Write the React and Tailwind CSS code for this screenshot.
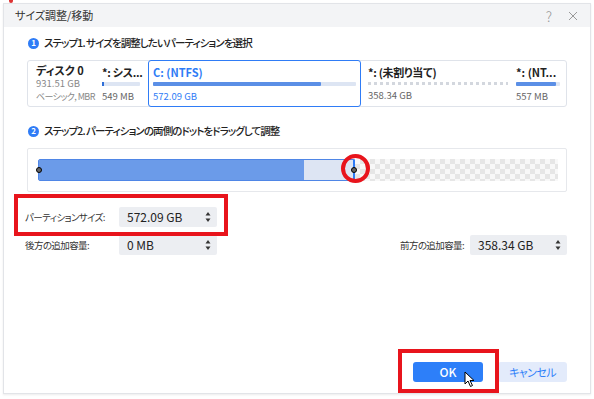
import React from "react";

const jp = { fontFamily: '"Noto Sans CJK JP", "Noto Sans", sans-serif' };

const StepBadge = ({ n }) => (
  <span className="flex h-[11px] w-[11px] items-center justify-center rounded-full bg-[#2f7cf6] text-[8px] font-bold leading-none text-white">
    {n}
  </span>
);

const Spinner = () => (
  <svg width="6" height="12" viewBox="0 0 6 12" className="shrink-0">
    <path d="M3 1 L5.5 4.5 H0.5 Z" fill="#333" />
    <path d="M3 11 L5.5 7.5 H0.5 Z" fill="#333" />
  </svg>
);

const NumberField = ({ value, width = "w-[98px]" }) => (
  <div className={`flex h-[20px] ${width} shrink-0 items-center justify-between rounded-[2px] bg-[#eceef2] pl-[8px] pr-[6px] text-[12px] tracking-normal text-[#222]`}>
    <span>{value}</span>
    <Spinner />
  </div>
);

const Bar = ({ fill }) => (
  <div className="h-[4px] w-full rounded-[1px] bg-[#dde5f3]">
    <div className="h-full rounded-[1px] bg-[#5b8fe6]" style={{ width: fill }} />
  </div>
);

export default function App() {
  return (
    <div
      className="relative h-[399px] w-[594px] overflow-hidden whitespace-nowrap bg-white [font-feature-settings:'palt']"
      style={jp}
    >
      <div className="absolute left-[9px] top-0 h-[3px] w-[4px] rounded-b-sm bg-[#d33]" />

      {/* dialog */}
      <div className="ml-[3px] mt-[3px] flex h-[391px] w-[588px] flex-col border border-[#e2e4e8] bg-white shadow-[0_1px_2px_rgba(0,0,0,0.08)]">
        {/* title bar */}
        <div className="flex h-[23px] items-center justify-between bg-[#f3f4f6] pl-[11px] pr-[12px]">
          <span className="text-[11px] text-[#333]">サイズ調整/移動</span>
          <div className="flex items-center gap-[16px] text-[#999]">
            <span className="text-[14px] font-light leading-none">?</span>
            <svg width="10" height="10" viewBox="0 0 10 10">
              <path d="M1 1 L9 9 M9 1 L1 9" stroke="#999" strokeWidth="1" />
            </svg>
          </div>
        </div>

        <div className="flex flex-1 flex-col px-[23px] pt-[9px]">
          {/* step 1 */}
          <div className="flex h-[14px] items-center gap-[5px] pl-[1px]">
            <StepBadge n="1" />
            <span className="text-[10.5px] font-medium tracking-[-0.9px] text-[#222]">ステップ1. サイズを調整したいパーティションを選択</span>
          </div>

          <div className="mt-[10px] flex h-[47px] rounded-[3px] border border-[#dfe3ea] text-[9.5px]">
            <div className="flex w-[70px] flex-col justify-center pl-[8px] leading-[13px]">
              <span className="text-[11px] font-bold text-[#222]">ディスク 0</span>
              <span className="text-[#888]">931.51 GB</span>
              <span className="text-[9px] tracking-[-0.6px] text-[#888]">ベーシック, MBR</span>
            </div>
            <div className="flex w-[50px] flex-col justify-center gap-[4px] pl-[4px] pr-[8px]">
              <span className="text-[11px] font-bold leading-[12px] tracking-[-0.3px] text-[#222]">*: シス...</span>
              <div className="h-[4px] w-full rounded-[1px] bg-[#dde5f3]">
                <div className="h-full w-[2px] bg-[#2f6fd8]" />
              </div>
              <span className="leading-[12px] text-[#666]">549 MB</span>
            </div>
            <div className="-my-px flex w-[213px] flex-col justify-center gap-[4px] rounded-[3px] border-[1.5px] border-[#2f7cf6] px-[4px]">
              <span className="text-[11px] font-bold leading-[12px] text-[#2f7cf6]">C: (NTFS)</span>
              <Bar fill="83%" />
              <span className="leading-[12px] text-[#2f7cf6]">572.09 GB</span>
            </div>
            <div className="flex w-[155px] flex-col justify-center gap-[4px] pl-[7px] pr-[8px]">
              <span className="text-[11px] font-bold leading-[12px] tracking-[-0.3px] text-[#222]">*: (未割り当て)</span>
              <div className="h-[3px] w-full bg-[image:repeating-linear-gradient(90deg,#d3d7de_0_3px,transparent_3px_6px)]" />
              <span className="leading-[12px] text-[#666]">358.34 GB</span>
            </div>
            <div className="flex flex-1 flex-col justify-center gap-[4px] pr-[6px]">
              <span className="text-[11px] font-bold leading-[12px] text-[#222]">*: (NT...</span>
              <Bar fill="90%" />
              <span className="leading-[12px] text-[#666]">557 MB</span>
            </div>
          </div>

          {/* step 2 */}
          <div className="mt-[17px] flex h-[14px] items-center gap-[5px] pl-[1px]">
            <StepBadge n="2" />
            <span className="text-[10.5px] font-medium tracking-[-0.9px] text-[#222]">ステップ2. パーティションの両側のドットをドラッグして調整</span>
          </div>

          <div className="mt-[10px] flex h-[44px] items-center rounded-[2px] border border-[#e6e8ec] pl-[10px] pr-[8px]">
            <div className="flex h-[22px] flex-1 items-stretch">
              <div className="relative flex w-[317px] rounded-l-[2px] border border-[#4f86e6] bg-[#dde5f3]">
                <div className="w-[265px] bg-[#6b9be9]" />
                <span className="absolute -left-[3px] top-1/2 h-[6px] w-[6px] -translate-y-1/2 rounded-full border border-black bg-[#666]" />
                <span className="absolute -right-[1px] top-0 h-full w-[2px] bg-[#2f7cf6]" />
                <span className="absolute -right-[3px] top-1/2 h-[6px] w-[6px] -translate-y-1/2 rounded-full border border-black bg-[#666]" />
              </div>
              <div className="flex-1 bg-[image:conic-gradient(#e6e6e6_25%,#f8f8f8_0_50%,#e6e6e6_0_75%,#f8f8f8_0)] bg-[length:10px_10px]" />
            </div>
          </div>

          {/* size fields */}
          <div className="mt-[15px] flex h-[20px] items-center text-[9.5px] tracking-[-0.6px] text-[#333]">
            <span className="-ml-[2px] w-[94px]">パーティションサイズ:</span>
            <NumberField value="572.09 GB" />
          </div>
          <div className="mt-[8px] flex h-[20px] items-center text-[9.5px] tracking-[-0.6px] text-[#333]">
            <span className="-ml-[2px] w-[94px]">後方の追加容量:</span>
            <NumberField value="0 MB" />
            <span className="ml-auto mr-[6px]">前方の追加容量:</span>
            <NumberField value="358.34 GB" width="w-[97px]" />
          </div>

          {/* buttons */}
          <div className="mb-[11px] mt-auto flex justify-end gap-[15px]">
            <button className="h-[20px] w-[70px] rounded-[3px] bg-[#2d7ff9] text-[12px] font-medium text-white">OK</button>
            <button className="h-[20px] w-[69px] rounded-[3px] bg-[#e3ebfb] text-[11px] tracking-[-0.6px] text-[#2d7ff9]">キャンセル</button>
          </div>
        </div>
      </div>

      {/* annotations */}
      <div className="pointer-events-none absolute left-[14px] top-[194px] h-[42px] w-[214px] border-[4px] border-[#e8141c]" />
      <div className="pointer-events-none absolute left-[398px] top-[349px] h-[44px] w-[101px] border-[4px] border-[#e8141c]" />
      <div className="pointer-events-none absolute left-[341px] top-[154px] h-[29px] w-[29px] rounded-full border-[4px] border-[#e8141c]" />
      <svg className="pointer-events-none absolute left-[464px] top-[371px]" width="11" height="17" viewBox="0 0 11 17">
        <path d="M1 1 V13 L4 10 L6.5 15.5 L8.5 14.5 L6 9.5 H10 Z" fill="white" stroke="black" strokeWidth="1" strokeLinejoin="round" />
      </svg>
    </div>
  );
}
